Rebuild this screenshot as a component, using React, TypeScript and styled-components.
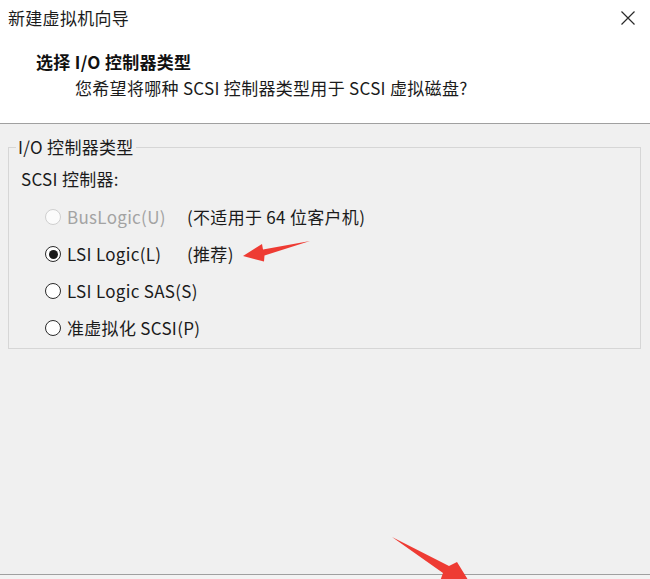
import styled, { createGlobalStyle } from "styled-components";
import { Fragment, useState } from "react";

const GlobalStyle = createGlobalStyle`
  html, body {
    margin: 0;
    padding: 0;
    background: #f0f0f0;
  }
  body {
    font-family: "Noto Sans CJK SC", "Noto Sans", "Liberation Sans", sans-serif;
    color: #1b1b1b;
    letter-spacing: 0.3px;
  }
`;

const Window = styled.div`
  position: relative;
  width: 650px;
  height: 579px;
  display: flex;
  flex-direction: column;
  background: #f0f0f0;
  overflow: hidden;
`;

const Header = styled.header`
  height: 123px;
  background: #ffffff;
  border-bottom: 1px solid #a0a0a0;
  display: flex;
  flex-direction: column;
`;

const TitleBar = styled.div`
  display: flex;
  align-items: center;
  justify-content: space-between;
  padding: 6px 12px 0 8px;
  height: 24px;
`;

const Title = styled.span`
  font-size: 17px;
  line-height: 24px;
`;

const CloseButton = styled.button`
  width: 20px;
  height: 20px;
  padding: 0;
  border: none;
  background: none;
  display: flex;
  align-items: center;
  justify-content: center;
  cursor: pointer;
`;

const Heading = styled.h1`
  margin: 20px 0 0 36px;
  font-size: 17px;
  line-height: 24px;
  font-weight: 700;
  color: #111;
`;

const Subtitle = styled.p`
  margin: 2px 0 0 75px;
  font-size: 17px;
  line-height: 24px;
`;

const Body = styled.main`
  flex: 1;
  padding: 11px 9px 0 8px;
`;

const GroupBox = styled.fieldset`
  margin: 0;
  padding: 8px 12px 8px 12px;
  border: 1px solid #d6d6d6;
  border-radius: 0;
`;

const Legend = styled.legend`
  margin-left: -5px;
  padding: 0 2px;
  font-size: 17px;
  line-height: 24px;
`;

const FieldLabel = styled.div`
  font-size: 17px;
  line-height: 24px;
`;

const OptionGrid = styled.div`
  display: grid;
  grid-template-columns: 142px auto;
  row-gap: 13px;
  margin: 14px 0 0 24px;
`;

const Option = styled.label<{ $disabled?: boolean }>`
  display: flex;
  align-items: center;
  gap: 6px;
  height: 24px;
  font-size: 17px;
  line-height: 24px;
  white-space: nowrap;
  color: ${(p) => (p.$disabled ? "#a3a3a3" : "#1b1b1b")};
  cursor: ${(p) => (p.$disabled ? "default" : "pointer")};
`;

const RadioDot = styled.span<{ $checked?: boolean; $disabled?: boolean }>`
  box-sizing: border-box;
  width: 16px;
  height: 16px;
  flex: none;
  border-radius: 50%;
  border: 1.3px solid ${(p) => (p.$disabled ? "#cfcfcf" : "#2a2a2a")};
  background: ${(p) => (p.$disabled ? "#fbfbfb" : "#fff")};
  display: flex;
  align-items: center;
  justify-content: center;

  &::after {
    content: "";
    width: 9px;
    height: 9px;
    border-radius: 50%;
    background: #1b1b1b;
    display: ${(p) => (p.$checked ? "block" : "none")};
  }
`;

const Note = styled.span`
  font-size: 17px;
  line-height: 24px;
  white-space: nowrap;
`;

const Footer = styled.footer`
  height: 4px;
  border-top: 1px solid #a0a0a0;
  background: #f3f3f3;
`;

const Marker = styled.svg`
  position: absolute;
  left: 0;
  top: 0;
  pointer-events: none;
`;

type Controller = { id: string; label: string; note?: string; disabled?: boolean };

const controllers: Controller[] = [
  { id: "buslogic", label: "BusLogic(U)", note: "(不适用于 64 位客户机)", disabled: true },
  { id: "lsi", label: "LSI Logic(L)", note: "(推荐)" },
  { id: "lsisas", label: "LSI Logic SAS(S)" },
  { id: "pvscsi", label: "准虚拟化 SCSI(P)" },
];

function App() {
  const [selected, setSelected] = useState("lsi");

  return (
    <Window>
      <GlobalStyle />
      <Header>
        <TitleBar>
          <Title>新建虚拟机向导</Title>
          <CloseButton aria-label="关闭">
            <svg width="16" height="16" viewBox="0 0 16 16">
              <path d="M1.5 1.5 L14.5 14.5 M14.5 1.5 L1.5 14.5" stroke="#2a2a2a" strokeWidth="1.2" />
            </svg>
          </CloseButton>
        </TitleBar>
        <Heading>选择 I/O 控制器类型</Heading>
        <Subtitle>您希望将哪种 SCSI 控制器类型用于 SCSI 虚拟磁盘?</Subtitle>
      </Header>

      <Body>
        <GroupBox>
          <Legend>I/O 控制器类型</Legend>
          <FieldLabel>SCSI 控制器:</FieldLabel>
          <OptionGrid>
            {controllers.map((c) => (
              <Fragment key={c.id}>
                <Option
                  $disabled={c.disabled}
                  onClick={() => !c.disabled && setSelected(c.id)}
                >
                  <RadioDot $checked={selected === c.id} $disabled={c.disabled} />
                  {c.label}
                </Option>
                <Note>{c.note ?? ""}</Note>
              </Fragment>
            ))}
          </OptionGrid>
        </GroupBox>
      </Body>

      <Footer />

      {/* red callout arrows */}
      <Marker width="650" height="579" viewBox="0 0 650 579">
        <polygon
          points="243,256 262,244 263,249.5 310,241 264.5,255.5 264,261.5"
          fill="#ee3b33"
        />
        <polygon
          points="392,537 449,566 457,562 478,596 436,592 443,573"
          fill="#ee3b33"
        />
      </Marker>
    </Window>
  );
}

export default App;
